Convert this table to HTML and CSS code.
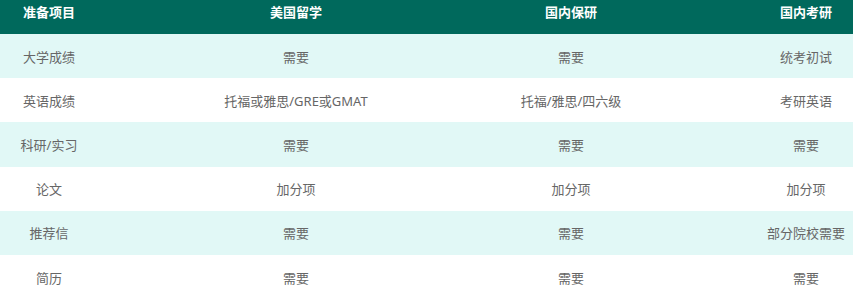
FILE: index.html
```html
<!DOCTYPE html>
<html lang="zh">
<head>
<meta charset="utf-8">
<link rel="stylesheet" href="styles.css">
</head>
<body>
<div class="wrap">
<div class="table">
  <div class="row head">
    <div class="cell">准备项目</div>
    <div class="cell">美国留学</div>
    <div class="cell">国内保研</div>
    <div class="cell">国内考研</div>
  </div>
  <div class="row alt">
    <div class="cell">大学成绩</div>
    <div class="cell">需要</div>
    <div class="cell">需要</div>
    <div class="cell">统考初试</div>
  </div>
  <div class="row">
    <div class="cell">英语成绩</div>
    <div class="cell">托福或雅思/GRE或GMAT</div>
    <div class="cell">托福/雅思/四六级</div>
    <div class="cell">考研英语</div>
  </div>
  <div class="row alt">
    <div class="cell">科研/实习</div>
    <div class="cell">需要</div>
    <div class="cell">需要</div>
    <div class="cell">需要</div>
  </div>
  <div class="row">
    <div class="cell">论文</div>
    <div class="cell">加分项</div>
    <div class="cell">加分项</div>
    <div class="cell">加分项</div>
  </div>
  <div class="row alt">
    <div class="cell">推荐信</div>
    <div class="cell">需要</div>
    <div class="cell">需要</div>
    <div class="cell">部分院校需要</div>
  </div>
  <div class="row">
    <div class="cell">简历</div>
    <div class="cell">需要</div>
    <div class="cell">需要</div>
    <div class="cell">需要</div>
  </div>
</div>
</div>
</body>
</html>
```

FILE: styles.css
```css
html, body {
  margin: 0;
  padding: 0;
  background: #ffffff;
  overflow: hidden;
}
.wrap {
  width: 853px;
  height: 293px;
  overflow: hidden;
}
.table {
  width: 964px;
  font-family: "Noto Sans", "Noto Sans CJK SC", sans-serif;
  font-size: 13px;
  color: #666666;
}
.row {
  display: grid;
  grid-template-columns: 98px 396px 154px 316px;
  height: 44.2px;
  align-items: center;
}
.row.alt {
  background: #e1f8f6;
}
.row.head {
  height: 34px;
  align-items: start;
  background: #00695c;
  color: #ffffff;
  font-weight: 700;
}
.head .cell {
  line-height: 24px;
}
.cell {
  text-align: center;
  white-space: nowrap;
}
```
